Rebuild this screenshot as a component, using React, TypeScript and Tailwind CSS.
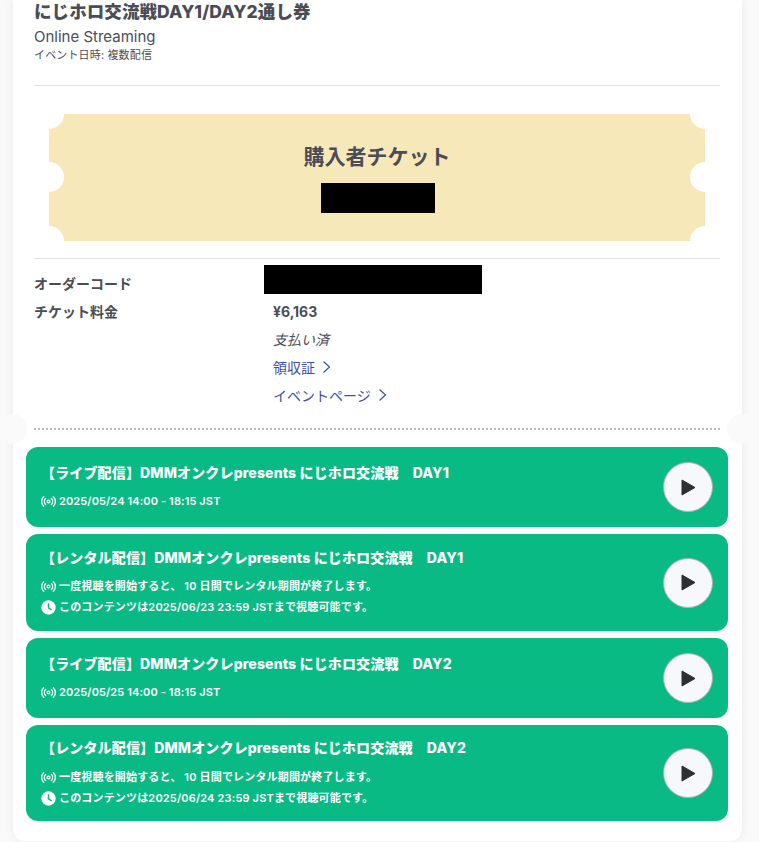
import React from "react";
import { Radio } from "lucide-react";

const font = { fontFamily: '"Inter","Noto Sans CJK JP","Noto Sans",sans-serif' };

function Chevron() {
  return (
    <svg width="9" height="14" viewBox="0 0 9 14" fill="none" stroke="currentColor" strokeWidth="1.2" className="ml-[7px]">
      <path d="M1.5 1.5 L7.5 7 L1.5 12.5" />
    </svg>
  );
}

function ClockIcon() {
  return (
    <svg width="15" height="15" viewBox="0 0 15 15" className="shrink-0">
      <circle cx="7.5" cy="7.5" r="7.2" fill="#fff" />
      <path d="M7.5 3.2 V7.8 L10.6 9.8" fill="none" stroke="#0bba84" strokeWidth="1.5" />
    </svg>
  );
}

function PlayButton() {
  return (
    <div className="flex h-[50px] w-[50px] shrink-0 items-center justify-center rounded-full border border-[#aeb0b2] bg-[#f7f8fb]">
      <svg width="15" height="17" viewBox="0 0 15 17">
        <path d="M1 1 L14 8.5 L1 16 Z" fill="#2f2f31" stroke="#2f2f31" strokeWidth="1" strokeLinejoin="round" />
      </svg>
    </div>
  );
}

function StreamCard({ title, lines, h, wide }: { title: string; lines: { icon: "radio" | "clock"; text: string }[]; h: string; wide?: boolean }) {
  return (
    <div className={`flex items-center justify-between rounded-[12px] bg-[#0aba85] pl-[15px] pr-[15px] text-white ${h}`}>
      <div className="flex flex-col pb-[1px]">
        <div className="text-[14px] font-extrabold leading-[20px] tracking-[0.15px] whitespace-nowrap">{title}</div>
        <div className="mt-[10px] flex flex-col gap-[3px]">
          {lines.map((l) => (
            <div key={l.text} className={`flex h-[18px] items-center gap-[3px] text-[11px] font-semibold whitespace-nowrap ${wide ? "tracking-[0.17px]" : "tracking-[0.12px]"}`}>
              {l.icon === "radio" ? <Radio size={15} strokeWidth={2} className="shrink-0 scale-110" /> : <ClockIcon />}
              <span>{l.text}</span>
            </div>
          ))}
        </div>
      </div>
      <PlayButton />
    </div>
  );
}

function Row({ label, children, h }: { label?: string; children: React.ReactNode; h: string }) {
  return (
    <div className={`flex items-center text-[14px] ${h}`}>
      <div className="w-[239px] font-bold text-[#4a4d55]">{label}</div>
      <div className="flex items-center">{children}</div>
    </div>
  );
}

export default function App() {
  const notch = "absolute h-[30px] w-[30px] rounded-full bg-white";
  return (
    <div style={font} className="h-[842px] w-[759px] overflow-hidden bg-[#fafafa] text-[#4a4d55]">
      <div className="relative ml-[13px] h-[841px] w-[729px] rounded-b-[12px] bg-white pl-[13px] pr-[14px] shadow-[0_0_10px_rgba(0,0,0,0.07)]">
        <div className="px-[8px]">
          <h1 className="text-[17.5px] font-extrabold leading-[23px] tracking-[0.08px]">にじホロ交流戦DAY1/DAY2通し券</h1>
          <p className="mt-[5px] text-[15px] leading-[18px]">Online Streaming</p>
          <p className="pt-[1px] text-[11px] leading-[16px] tracking-[0.15px]">イベント日時: 複数配信</p>
          <hr className="mt-[22px] border-[#dfe0e3]" />
          <div className="relative mx-[15px] mt-[28px] flex h-[127px] flex-col items-center overflow-hidden bg-[#f7e8b9] pt-[29px]">
            <span className={`${notch} -left-[15px] -top-[15px]`} />
            <span className={`${notch} -left-[15px] top-[48px]`} />
            <span className={`${notch} -left-[15px] -bottom-[15px]`} />
            <span className={`${notch} -right-[15px] -top-[15px]`} />
            <span className={`${notch} -right-[15px] top-[48px]`} />
            <span className={`${notch} -right-[15px] -bottom-[15px]`} />
            <div className="text-[21px] font-bold leading-[28px]">購入者チケット</div>
            <div className="ml-[1px] mt-[12px] h-[30px] w-[114px] bg-black" />
          </div>
          <hr className="mt-[17px] border-[#dfe0e3]" />
          <div className="mt-[6px] flex h-[29px] items-end text-[14px]">
            <div className="w-[230px] font-bold leading-[20px]">オーダーコード</div>
            <div className="h-[29px] w-[218px] bg-black" />
          </div>
          <div className="mt-[3px]">
            <Row label="チケット料金" h="h-[28px]"><span className="font-bold">¥6,163</span></Row>
            <Row h="h-[28px]"><span className="italic">支払い済</span></Row>
            <Row h="h-[28px]"><span className="flex items-center text-[#3f51a5]">領収証<Chevron /></span></Row>
            <Row h="h-[28px]"><span className="flex items-center text-[#3f51a5]">イベントページ<Chevron /></span></Row>
          </div>
          <div className="mt-[19px] border-t-2 border-dotted border-[#b9bbbd]" />
        </div>

        <span className="absolute -left-[16px] top-[414px] h-[30px] w-[30px] rounded-full bg-[#fafafa]" />
        <span className="absolute -right-[15px] top-[414px] h-[30px] w-[30px] rounded-full bg-[#fafafa]" />

        <div className="mt-[17px] flex flex-col gap-[7px]">
          <StreamCard
            h="h-[80px]"
            title="【ライブ配信】DMMオンクレpresents にじホロ交流戦　DAY1"
            lines={[{ icon: "radio", text: "2025/05/24 14:00 - 18:15 JST" }]}
          />
          <StreamCard
            h="h-[97px]"
            wide
            title="【レンタル配信】DMMオンクレpresents にじホロ交流戦　DAY1"
            lines={[
              { icon: "radio", text: "一度視聴を開始すると、 10 日間でレンタル期間が終了します。" },
              { icon: "clock", text: "このコンテンツは2025/06/23 23:59 JSTまで視聴可能です。" },
            ]}
          />
          <StreamCard
            h="h-[80px]"
            title="【ライブ配信】DMMオンクレpresents にじホロ交流戦　DAY2"
            lines={[{ icon: "radio", text: "2025/05/25 14:00 - 18:15 JST" }]}
          />
          <StreamCard
            h="h-[96px]"
            wide
            title="【レンタル配信】DMMオンクレpresents にじホロ交流戦　DAY2"
            lines={[
              { icon: "radio", text: "一度視聴を開始すると、 10 日間でレンタル期間が終了します。" },
              { icon: "clock", text: "このコンテンツは2025/06/24 23:59 JSTまで視聴可能です。" },
            ]}
          />
        </div>
      </div>
    </div>
  );
}
